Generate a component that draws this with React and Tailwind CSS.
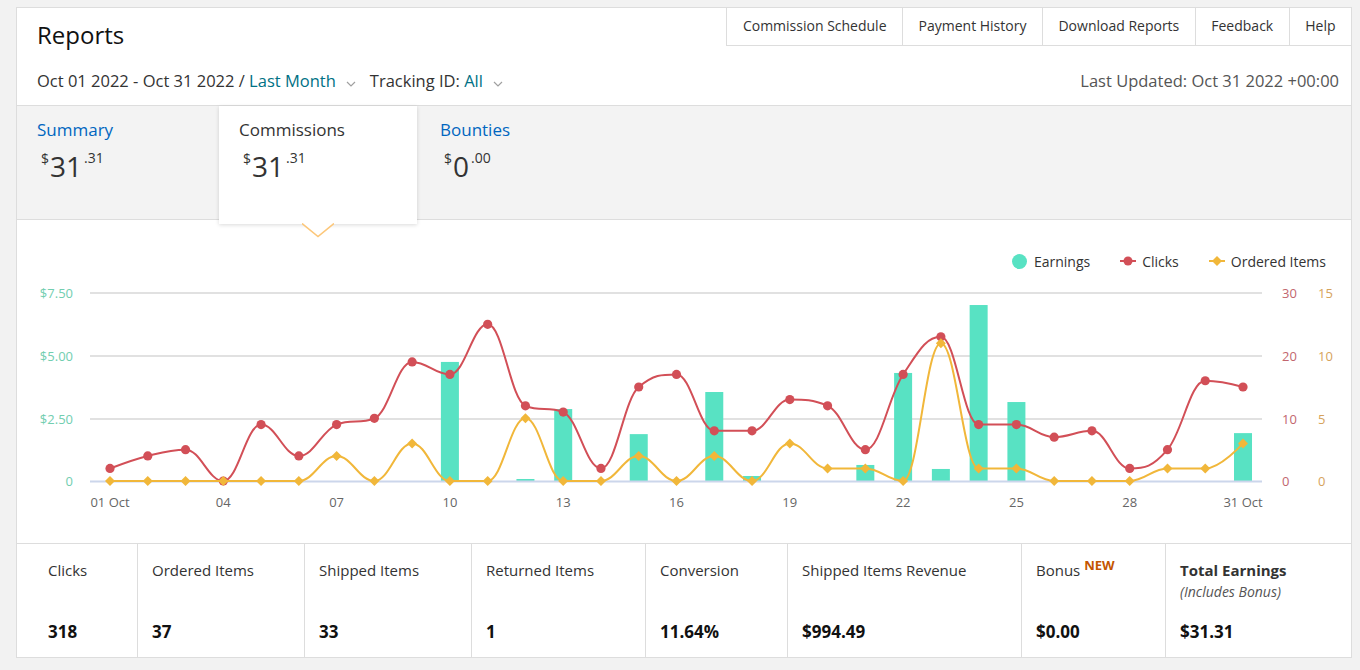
import React from 'react';

const clicks = [2, 4, 5, 0, 9, 4, 9, 10, 19, 17, 25, 12, 11, 2, 15, 17, 8, 8, 13, 12, 5, 17, 23, 9, 9, 7, 8, 2, 5, 16, 15];
const ordered = [0, 0, 0, 0, 0, 0, 2, 0, 3, 0, 0, 5, 0, 0, 2, 0, 2, 0, 3, 1, 1, 0, 11, 1, 1, 0, 0, 0, 1, 1, 3];
const earnings = {
    10: 4.75, 12: 0.08, 13: 2.87, 15: 1.87, 17: 3.55, 18: 0.2, 21: 0.64,
    22: 4.31, 23: 0.48, 24: 7.02, 25: 3.15, 31: 1.91,
};

const BASE = 210;
const PLOT_H = 188;
const dayX = (i) => 93 + i * 37.767;

// highcharts-like spline
const splinePath = (pts) => {
    const sm = 1.5;
    const den = 2.5;
    const ctrl = pts.map((p, i) => {
        const prev = pts[i - 1];
        const next = pts[i + 1];
        if (!prev || !next) return [p, p];
        let lx = (sm * p[0] + prev[0]) / den;
        let ly = (sm * p[1] + prev[1]) / den;
        let rx = (sm * p[0] + next[0]) / den;
        let ry = (sm * p[1] + next[1]) / den;
        const corr = ((ry - ly) * (rx - p[0])) / (rx - lx) + p[1] - ry;
        ly += corr;
        ry += corr;
        if (ly > prev[1] && ly > p[1]) {
            ly = Math.max(prev[1], p[1]);
            ry = 2 * p[1] - ly;
        } else if (ly < prev[1] && ly < p[1]) {
            ly = Math.min(prev[1], p[1]);
            ry = 2 * p[1] - ly;
        }
        if (ry > next[1] && ry > p[1]) {
            ry = Math.max(next[1], p[1]);
            ly = 2 * p[1] - ry;
        } else if (ry < next[1] && ry < p[1]) {
            ry = Math.min(next[1], p[1]);
            ly = 2 * p[1] - ry;
        }
        return [[lx, ly], [rx, ry]];
    });
    let d = `M${pts[0][0]},${pts[0][1]}`;
    for (let i = 1; i < pts.length; i++) {
        const a = ctrl[i - 1][1];
        const b = ctrl[i][0];
        d += ` C${a[0]},${a[1]} ${b[0]},${b[1]} ${pts[i][0]},${pts[i][1]}`;
    }
    return d;
};

const Chevron = () => (
    <svg width="10" height="6" viewBox="0 0 10 6" className="ml-[10px] mt-[6px]">
        <polyline points="1,1 5,5 9,1" fill="none" stroke="#a0a0a0" strokeWidth="1.2" />
    </svg>
);

const Money = ({ whole, cents }) => (
    <div className="flex items-start text-[#333] mt-[7px] ml-[4px]">
        <span className="text-[14px] leading-none mt-[3px]">$</span>
        <span className="text-[28px] leading-none mt-[3px] ml-[1px]">{whole}</span>
        <span className="text-[14px] leading-none mt-[2px] ml-[2px]">.{cents}</span>
    </div>
);

const Chart = () => {
    const clickPts = clicks.map((v, i) => [dayX(i), BASE - (v * PLOT_H) / 30]);
    const orderPts = ordered.map((v, i) => [dayX(i), BASE - (v * PLOT_H) / 15]);
    const grid = [22, 85, 148];
    const leftLabels = ['$7.50', '$5.00', '$2.50', '0'];
    const clickLabels = ['30', '20', '10', '0'];
    const orderLabels = ['15', '10', '5', '0'];
    const xLabels = [
        [0, '01 Oct'], [3, '04'], [6, '07'], [9, '10'], [12, '13'], [15, '16'],
        [18, '19'], [21, '22'], [24, '25'], [27, '28'], [30, '31 Oct'],
    ];
    const ys = [22, 85, 148, 210];

    return (
        <svg width="1334" height="272" className="block" style={{ fontFamily: '"Open Sans", sans-serif' }}>
            {grid.map((y) => (
                <line key={y} x1="73" x2="1245" y1={y} y2={y} stroke="#e1e1e1" strokeWidth="2" />
            ))}
            {leftLabels.map((t, i) => (
                <text key={t} x="56" y={ys[i] + 5} textAnchor="end" fontSize="13" fill="#72ceb0">{t}</text>
            ))}
            {clickLabels.map((t, i) => (
                <text key={t} x="1265" y={ys[i] + 5} fontSize="13" fill="#c2666e">{t}</text>
            ))}
            {orderLabels.map((t, i) => (
                <text key={t} x="1301" y={ys[i] + 5} fontSize="13" fill="#d6a35c">{t}</text>
            ))}
            {Object.entries(earnings).map(([day, v]) => {
                const h = Math.max(2, (v * PLOT_H) / 7.5);
                return (
                    <rect key={day} x={dayX(day - 1) - 9} y={BASE - h} width="18" height={h} fill="#58e2c3" />
                );
            })}
            <line x1="73" x2="1245" y1={BASE + 0.5} y2={BASE + 0.5} stroke="#ccd6eb" strokeWidth="2" />
            <path d={splinePath(clickPts)} fill="none" stroke="#d24f57" strokeWidth="2" />
            {clickPts.map(([x, y], i) => (
                <circle key={i} cx={x} cy={y} r="4.6" fill="#d24f57" />
            ))}
            <path d={splinePath(orderPts)} fill="none" stroke="#f1b73a" strokeWidth="2" />
            {orderPts.map(([x, y], i) => (
                <polygon key={i} points={`${x},${y - 5} ${x + 5},${y} ${x},${y + 5} ${x - 5},${y}`} fill="#f1b73a" />
            ))}
            {xLabels.map(([i, t]) => (
                <text key={t} x={dayX(i)} y="236" textAnchor="middle" fontSize="13" fill="#666">{t}</text>
            ))}
        </svg>
    );
};

const stats = [
    { label: 'Clicks', value: '318', w: 'w-[120px]', pl: 'pl-[31px]' },
    { label: 'Ordered Items', value: '37', w: 'w-[167px]' },
    { label: 'Shipped Items', value: '33', w: 'w-[167px]' },
    { label: 'Returned Items', value: '1', w: 'w-[174px]' },
    { label: 'Conversion', value: '11.64%', w: 'w-[142px]' },
    { label: 'Shipped Items Revenue', value: '$994.49', w: 'w-[234px]' },
    { label: 'Bonus', value: '$0.00', w: 'w-[144px]', isNew: true },
    { label: 'Total Earnings', value: '$31.31', w: 'flex-1', total: true },
];

const navItems = ['Commission Schedule', 'Payment History', 'Download Reports', 'Feedback', 'Help'];

const App = () => {
    return (
        <div
            className="min-h-[670px] bg-[#f2f2f2] pt-[7px] pl-[16px]"
            style={{ fontFamily: '"Open Sans", "Noto Sans", sans-serif' }}
        >
            <div className="w-[1336px] bg-white border border-[#dddddd]">
                {/* header */}
                <div className="h-[98px] border-b border-[#dddddd]">
                    <div className="flex justify-between items-start h-[44px]">
                        <h1 className="pl-[20px] pt-[11px] text-[24px] leading-[32px] text-[#111]">Reports</h1>
                        <div className="flex border-l border-b border-[#dddddd] h-[38px]">
                            {navItems.map((n, i) => (
                                <div
                                    key={n}
                                    className={`px-[15.5px] pb-[2px] flex items-center text-[14px] text-[#333] ${i > 0 ? 'border-l border-[#dddddd]' : ''}`}
                                >
                                    {n}
                                </div>
                            ))}
                        </div>
                    </div>
                    <div className="flex justify-between items-center px-[20px] mt-[17px] h-[24px] text-[16.5px]">
                        <div className="flex items-center text-[#333]">
                            <span>
                                Oct 01 2022 - Oct 31 2022 / <span className="text-[#007185]">Last Month</span>
                            </span>
                            <Chevron />
                            <span className="ml-[14px]">
                                Tracking ID: <span className="text-[#007185]">All</span>
                            </span>
                            <Chevron />
                        </div>
                        <div className="text-[#555] mr-[-8px]">Last Updated: Oct 31 2022 +00:00</div>
                    </div>
                </div>

                {/* tabs */}
                <div className="flex h-[114px] bg-[#f3f3f3] border-b border-[#dddddd]">
                    <div className="w-[202px] pl-[20px] pt-[12px]">
                        <div className="text-[17px] leading-[24px] text-[#0066c0]">Summary</div>
                        <Money whole="31" cents="31" />
                    </div>
                    <div className="relative z-10 w-[198px] h-[118px] self-start bg-white shadow-[0_1px_4px_rgba(0,0,0,0.15)] pl-[20px] pt-[12px]">
                        <div className="text-[17px] leading-[24px] text-[#333]">Commissions</div>
                        <Money whole="31" cents="31" />
                        <svg width="32" height="15" className="absolute left-[83px] bottom-[-14px]">
                            <polygon points="0,0 32,0 16,14" fill="white" />
                            <polyline points="0,0.5 16,13.5 32,0.5" fill="none" stroke="#fcc77a" strokeWidth="1.6" />
                        </svg>
                    </div>
                    <div className="w-[202px] pl-[23px] pt-[12px]">
                        <div className="text-[17px] leading-[24px] text-[#0066c0]">Bounties</div>
                        <Money whole="0" cents="00" />
                    </div>
                </div>

                {/* chart */}
                <div className="pt-[31px]">
                    <div className="flex justify-end items-center h-[20px] pr-[25px] gap-[30px] text-[14px] text-[#333]">
                        <div className="flex items-center gap-[7px]">
                            <span className="w-[15px] h-[15px] rounded-full bg-[#58e2c3]" />
                            <span>Earnings</span>
                        </div>
                        <div className="flex items-center gap-[6px]">
                            <svg width="16" height="10">
                                <line x1="0" x2="16" y1="5" y2="5" stroke="#d24f57" strokeWidth="2" />
                                <circle cx="8" cy="5" r="4.5" fill="#d24f57" />
                            </svg>
                            <span>Clicks</span>
                        </div>
                        <div className="flex items-center gap-[6px]">
                            <svg width="16" height="10">
                                <line x1="0" x2="16" y1="5" y2="5" stroke="#f1b73a" strokeWidth="2" />
                                <polygon points="8,0 13,5 8,10 3,5" fill="#f1b73a" />
                            </svg>
                            <span>Ordered Items</span>
                        </div>
                    </div>
                    <Chart />
                </div>

                {/* stats */}
                <div className="flex h-[114px] border-t border-[#dddddd]">
                    {stats.map((s, i) => (
                        <div
                            key={s.label}
                            className={`${s.w} ${s.pl || 'pl-[14px]'} pt-[16px] pb-[13px] flex flex-col justify-between ${i > 0 ? 'border-l border-[#dddddd]' : ''}`}
                        >
                            <div>
                                <div className={`text-[15px] leading-[20px] text-[#333] ${s.total ? 'font-bold' : ''}`}>
                                    {s.label}
                                    {s.isNew && (
                                        <sup className="ml-[4px] text-[13px] font-bold text-[#c45500]">NEW</sup>
                                    )}
                                </div>
                                {s.total && (
                                    <div className="text-[14px] leading-[20px] italic text-[#555] mt-[2px]">(Includes Bonus)</div>
                                )}
                            </div>
                            <div className="text-[17px] leading-[24px] font-bold text-[#111]">{s.value}</div>
                        </div>
                    ))}
                </div>
            </div>
        </div>
    );
};

export default App;
